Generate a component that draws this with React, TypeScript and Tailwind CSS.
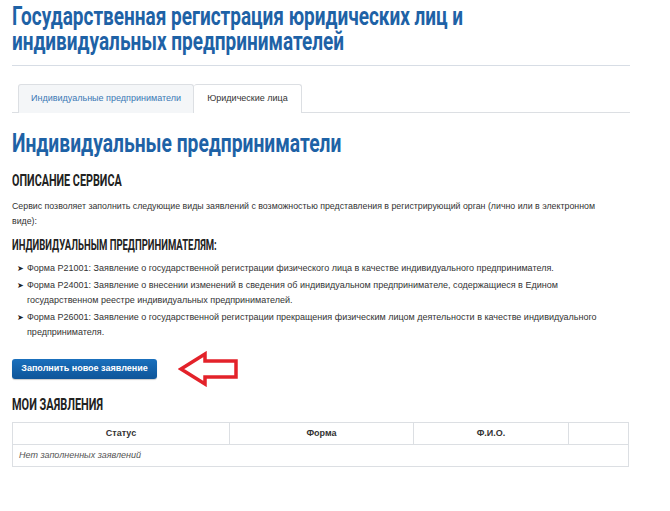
const items = [
  'Форма Р21001: Заявление о государственной регистрации физического лица в качестве индивидуального предпринимателя.',
  'Форма Р24001: Заявление о внесении изменений в сведения об индивидуальном предпринимателе, содержащиеся в Едином государственном реестре индивидуальных предпринимателей.',
  'Форма Р26001: Заявление о государственной регистрации прекращения физическим лицом деятельности в качестве индивидуального предпринимателя.',
];

// no condensed face installed: Roboto bold squeezed horizontally
const narrow = "block whitespace-nowrap origin-left font-['Roboto',sans-serif] font-bold";

function Arrow() {
  return (
    <svg width="62" height="36" viewBox="0 0 62 36" className="block">
      <path
        d="M3 18 L27 3 L27 10 L58 10 L58 26 L27 26 L27 33 Z"
        fill="none"
        stroke="#e3222a"
        strokeWidth="3.5"
        strokeLinejoin="miter"
      />
    </svg>
  );
}

export default function App() {
  return (
    <div className="w-[670px] h-[511px] bg-white text-[#333] font-['Liberation_Sans',Arial,sans-serif] overflow-hidden">
      <div className="w-[618px] ml-[12px]">
        {/* Page title */}
        <h1 className="pt-[4px] pb-[11px] border-b border-[#d7dde5] text-[#1e62a6] text-[26px] leading-[25px]">
          <span className={`${narrow} scale-x-[0.73]`}>
            Государственная регистрация юридических лиц и
            <br />
            индивидуальных предпринимателей
          </span>
        </h1>

        {/* Tabs */}
        <div className="mt-[18px] flex border-b border-[#dcdfe3] pl-[6px] h-[29px]">
          <div className="h-[29px] w-[176px] flex items-center justify-center bg-[#f4f6f8] border border-[#dcdfe3] border-b-0 rounded-t-[3px] text-[9px] text-[#3b78b5]">
            Индивидуальные предприниматели
          </div>
          <div className="h-[29px] w-[108px] flex items-center justify-center bg-white border border-l-0 border-[#dcdfe3] border-b-0 rounded-t-[3px] text-[9px] text-[#333]">
            Юридические лица
          </div>
        </div>

        <h2 className="mt-[17px] text-[#1e62a6] text-[26px] leading-[26px]">
          <span className={`${narrow} scale-x-[0.74]`}>Индивидуальные предприниматели</span>
        </h2>

        <h3 className="mt-[15px] text-[#222] text-[17px] leading-[18px] uppercase">
          <span className={`${narrow} scale-x-[0.635]`}>Описание сервиса</span>
        </h3>

        <p className="mt-[10px] pr-[14px] text-[8.8px] leading-[15px] text-[#333]">
          Сервис позволяет заполнить следующие виды заявлений с возможностью представления в регистрирующий орган (лично или в электронном виде):
        </p>

        <h3 className="mt-[8px] text-[#222] text-[15px] leading-[16px] uppercase">
          <span className={`${narrow} scale-x-[0.635]`}>Индивидуальным предпринимателям:</span>
        </h3>

        <ul className="mt-[8px] flex flex-col gap-[2px] text-[9px] leading-[15px] text-[#333]">
          {items.map((t) => (
            <li key={t} className="flex pl-[5px] pr-[20px]">
              <span className="w-[10px] shrink-0 text-[8px] text-[#222]">➤</span>
              <span>{t}</span>
            </li>
          ))}
        </ul>

        <div className="mt-[11px] flex items-center gap-[21px]">
          <button className="h-[20px] w-[145px] rounded-[3px] bg-gradient-to-b from-[#1a70bd] to-[#0e5599] text-white text-[9px] font-bold shadow-[0_1px_1px_rgba(0,0,0,0.2)]">
            Заполнить новое заявление
          </button>
          <Arrow />
        </div>

        <h3 className="mt-[8px] text-[#222] text-[17px] leading-[18px] uppercase">
          <span className={`${narrow} scale-x-[0.645]`}>Мои заявления</span>
        </h3>

        <table className="mt-[9px] w-[617px] border-collapse text-[9px] text-[#333]">
          <thead>
            <tr className="h-[22px]">
              <th className="w-[217px] border border-[#dcdfe3] font-bold">Статус</th>
              <th className="w-[184px] border border-[#dcdfe3] font-bold">Форма</th>
              <th className="w-[155px] border border-[#dcdfe3] font-bold">Ф.И.О.</th>
              <th className="border border-[#dcdfe3]"></th>
            </tr>
          </thead>
          <tbody>
            <tr className="h-[22px]">
              <td colSpan={4} className="border border-[#dcdfe3] px-[6px] italic text-[#555]">
                Нет заполненных заявлений
              </td>
            </tr>
          </tbody>
        </table>
      </div>
    </div>
  );
}
